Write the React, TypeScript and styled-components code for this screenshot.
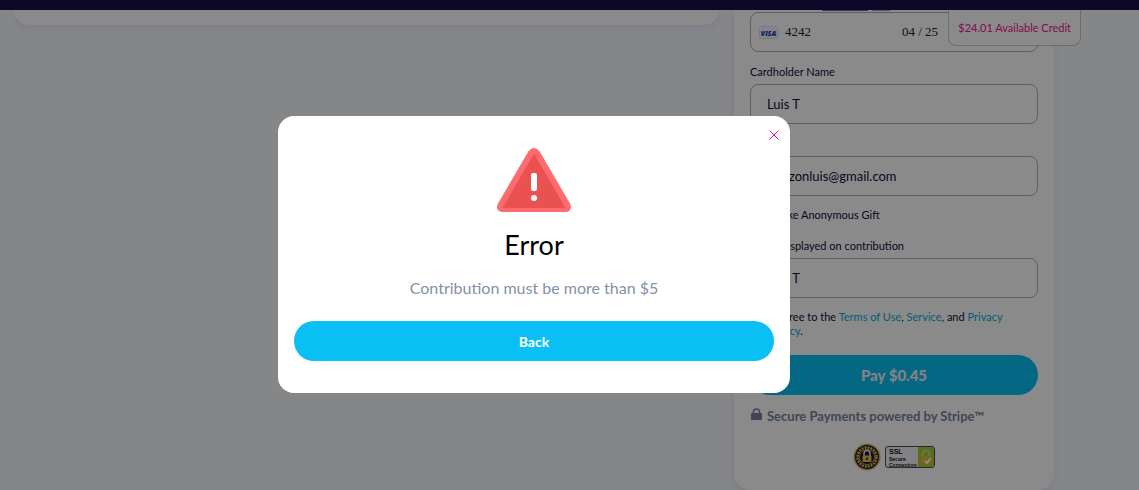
import React from "react";
import styled, { createGlobalStyle } from "styled-components";

const GlobalStyle = createGlobalStyle`
  * { box-sizing: border-box; }
  body {
    margin: 0;
    background: #f6f8fb;
    color: #140c3c;
    font-family: Lato, "Liberation Sans", sans-serif;
    font-size: 11px;
  }
  button, input { font: inherit; color: inherit; }
`;

const Header = styled.header`
  position: relative;
  height: 10px;
  background: #190d4b;
`;

const CreditMenu = styled.div`
  position: absolute;
  top: 10px;
  right: 58px;
  z-index: 1;
  padding: 10px 9px;
  border: 1px solid #c3c9d6;
  border-top: 0;
  border-radius: 0 0 8px 8px;
  background: #fff;
  color: #f0149b;
  line-height: 15px;
  white-space: nowrap;
`;

const Main = styled.main`
  display: flex;
  align-items: flex-start;
  gap: 15px;
  padding: 0 85px 0 14px;
  min-height: calc(100vh - 10px);
  overflow: hidden;
`;

const Summary = styled.section`
  flex: 1;
  height: 15px;
  border-radius: 0 0 16px 16px;
  background: #fff;
  box-shadow: 0 2px 10px rgba(80, 60, 200, 0.1);
`;

const Checkout = styled.form`
  display: flex;
  flex-direction: column;
  width: 320px;
  padding: 0 16px 19px;
  border-radius: 0 0 16px 16px;
  background: #fff;
  box-shadow: 0 2px 10px rgba(80, 60, 200, 0.1);
`;

const TabStrip = styled.div`
  display: flex;
  justify-content: center;
  gap: 4px;
  height: 2px;
  padding-right: 76px;
`;

const Tab = styled.span<{ $wide?: boolean }>`
  width: ${(p) => (p.$wide ? 46 : 18)}px;
  height: 1px;
  background: ${(p) => (p.$wide ? "#6a63a0" : "#a9a4cc")};
`;

const CardRow = styled.div`
  display: flex;
  align-items: center;
  gap: 7px;
  height: 40px;
  padding: 0 8px;
  border: 1px solid #9fb3cc;
  border-radius: 8px;
  color: #222;
  font-family: "Liberation Serif", serif;
  font-size: 13px;
`;

const CardInput = styled.input`
  width: 48px;
  padding: 0;
  border: 0;
  outline: 0;
  background: none;
`;

const Expiry = styled(CardInput)`
  margin-right: 79px;
  margin-left: auto;
`;

const Field = styled.div<{ $gap?: number }>`
  display: flex;
  flex-direction: column;
  gap: 4px;
  margin-top: ${(p) => p.$gap ?? 12}px;
`;

const Label = styled.label`
  line-height: 16px;
`;

const TextInput = styled.input`
  height: 40px;
  padding: 0 16px;
  border: 1px solid #9fb3cc;
  border-radius: 8px;
  outline: 0;
  background: #fff;
  font-size: 13px;
`;

const CheckRow = styled.div`
  display: flex;
  align-items: flex-start;
  gap: 8px;
  margin-top: 12px;
  line-height: 14px;
`;

const Checkbox = styled.input`
  flex: none;
  width: 14px;
  height: 14px;
  margin: 0;
`;

const Link = styled.a`
  color: #09a9dc;
  text-decoration: none;
`;

const PillButton = styled.button`
  width: 100%;
  height: 40px;
  border: 0;
  border-radius: 20px;
  background: #09bff4;
  color: #fff;
  font-size: 14px;
  font-weight: 700;
`;

const PayButton = styled(PillButton)`
  margin-top: 17px;
  color: #f4f0f2;
  font-size: 15px;
  font-weight: 900;
`;

const Secure = styled.p`
  display: flex;
  gap: 4px;
  margin: 13px 0 0;
  color: #76849c;
  font-size: 13px;
  font-weight: 700;
  line-height: 16px;
  white-space: nowrap;
`;

const Badges = styled.div`
  display: flex;
  align-items: center;
  justify-content: center;
  gap: 4px;
  margin-top: 19px;
`;

const SslBadge = styled.div`
  display: flex;
  width: 50px;
  height: 22px;
  overflow: hidden;
  border: 1px solid #4a4a5c;
  border-radius: 3px;
  background: #f1f1f4;

  svg { flex: none; }
`;

const SslText = styled.div`
  flex: 1;
  min-width: 0;
  padding: 1px 0 0 3px;
  color: #111;
  font: 700 5px/6px "Liberation Sans", sans-serif;
  white-space: nowrap;

  strong {
    display: block;
    font-size: 7px;
    line-height: 8px;
  }
`;

const Overlay = styled.div`
  position: fixed;
  inset: 0;
  z-index: 2;
  display: flex;
  align-items: center;
  justify-content: center;
  padding: 19px 71px 0 0;
  background: rgba(0, 0, 0, 0.46);
`;

const Dialog = styled.section`
  position: relative;
  display: flex;
  flex-direction: column;
  align-items: center;
  width: 512px;
  max-width: 100%;
  padding: 32px 16px;
  border-radius: 16px;
  background: #fff;
`;

const CloseButton = styled.button`
  position: absolute;
  top: 14px;
  right: 11px;
  display: flex;
  padding: 0;
  border: 0;
  background: none;
`;

const Title = styled.h1`
  margin: 17px 0 0;
  color: #000;
  font-size: 27px;
  font-weight: 400;
  line-height: 32px;
`;

const Message = styled.p`
  margin: 15px 0 21px;
  color: #8391a9;
  font-size: 16px;
  line-height: 24px;
`;

const WarningIcon = () => (
  <svg width="74" height="64" viewBox="0 0 74 64" aria-hidden="true">
    <path d="M31.5 3.2Q37-3 42.5 3.2L73 55.5Q76 62 69.5 64H4.5Q-2 62 1 55.5Z" fill="#ff6b6e" />
    <path d="M37 5.5L68.5 60H5.5Z" fill="#ea5252" />
    <rect x="34" y="25" width="6" height="18" rx="2" fill="#fff" />
    <circle cx="37" cy="50" r="3" fill="#fff" />
  </svg>
);

const VisaIcon = () => (
  <svg width="19" height="13" viewBox="0 0 19 13" aria-hidden="true">
    <rect x="0.5" y="0.5" width="18" height="12" rx="1" fill="#f4f6fc" stroke="#dfe4f2" />
    <text
      x="9.5"
      y="9.5"
      textAnchor="middle"
      fontFamily="Open Sans"
      fontSize="7"
      fontWeight="800"
      fontStyle="italic"
      fill="#1a35b0"
    >
      VISA
    </text>
  </svg>
);

const LockIcon = () => (
  <svg width="13" height="14" viewBox="0 0 13 14" aria-hidden="true">
    <path d="M3.5 6V4a3 3 0 0 1 6 0v2" fill="none" stroke="#76849c" strokeWidth="1.5" />
    <rect x="1" y="5" width="11" height="7" rx="1" fill="#76849c" />
  </svg>
);

const SealIcon = () => (
  <svg width="28" height="28" viewBox="0 0 28 28" aria-hidden="true">
    <circle cx="14" cy="14" r="13" fill="#c9a04a" stroke="#dcbc70" strokeWidth="1.5" strokeDasharray="1.5 1" />
    <circle cx="14" cy="14" r="12" fill="#241d12" />
    <circle cx="14" cy="14" r="9.5" fill="none" stroke="#d9bd7c" strokeWidth="2.5" strokeDasharray="2 1" />
    <circle cx="14" cy="14" r="7.5" fill="#16130f" stroke="#c9a04a" />
    <path d="M11 13v-2.5a3 3 0 0 1 6 0V13" fill="none" stroke="#eee" strokeWidth="1.5" />
    <rect x="9.5" y="12.5" width="9" height="6.5" rx="1" fill="#e4bd55" />
    <path d="M14 14.5v2.5" stroke="#16130f" strokeWidth="1.5" />
  </svg>
);

const SslLock = () => (
  <svg width="16" height="20" viewBox="0 0 16 20" aria-hidden="true">
    <rect width="16" height="20" fill="#a4c932" />
    <path d="M4.5 10V7a3.5 3.5 0 0 1 7 0v3" fill="none" stroke="#d3d9c0" strokeWidth="1.5" />
    <rect x="3" y="9" width="10" height="8" rx="1" fill="#e0bb33" />
    <path d="M7 14l2 2 4-5" fill="none" stroke="#fff" strokeWidth="2" />
  </svg>
);

export default function App() {
  return (
    <>
      <GlobalStyle />
      <Header>
        <CreditMenu>$24.01 Available Credit</CreditMenu>
      </Header>
      <Main>
        <Summary />
        <Checkout onSubmit={(e) => e.preventDefault()}>
          <TabStrip>
            <Tab $wide />
            <Tab />
          </TabStrip>
          <CardRow>
            <VisaIcon />
            <CardInput aria-label="Card number" defaultValue="4242" />
            <Expiry aria-label="Expiry date" defaultValue="04 / 25" />
          </CardRow>
          <Field>
            <Label htmlFor="holder">Cardholder Name</Label>
            <TextInput id="holder" defaultValue="Luis T" />
          </Field>
          <Field>
            <Label htmlFor="email">Email</Label>
            <TextInput id="email" type="email" defaultValue="ponzonluis@gmail.com" />
          </Field>
          <CheckRow>
            <Checkbox id="anonymous" type="checkbox" />
            <label htmlFor="anonymous">Make Anonymous Gift</label>
          </CheckRow>
          <Field $gap={16}>
            <Label htmlFor="display">Name displayed on contribution</Label>
            <TextInput id="display" defaultValue="Luis T" />
          </Field>
          <CheckRow>
            <Checkbox id="terms" type="checkbox" />
            <label htmlFor="terms">
              I agree to the <Link href="#terms">Terms of Use</Link>, <Link href="#service">Service</Link>, and{" "}
              <Link href="#privacy">
                Privacy
                <br />
                Policy
              </Link>
              .
            </label>
          </CheckRow>
          <PayButton type="submit">Pay $0.45</PayButton>
          <Secure>
            <LockIcon />
            Secure Payments powered by Stripe™
          </Secure>
          <Badges>
            <SealIcon />
            <SslBadge>
              <SslText>
                <strong>SSL</strong>
                Secure
                <br />
                Connection
              </SslText>
              <SslLock />
            </SslBadge>
          </Badges>
        </Checkout>
      </Main>
      <Overlay>
        <Dialog role="alertdialog" aria-labelledby="error-title" aria-describedby="error-text">
          <CloseButton type="button" aria-label="Close">
            <svg width="10" height="10" viewBox="0 0 10 10" aria-hidden="true">
              <path d="M0.5 0.5L9.5 9.5M9.5 0.5L0.5 9.5" stroke="#f0149b" />
            </svg>
          </CloseButton>
          <WarningIcon />
          <Title id="error-title">Error</Title>
          <Message id="error-text">Contribution must be more than $5</Message>
          <PillButton type="button">Back</PillButton>
        </Dialog>
      </Overlay>
    </>
  );
}
